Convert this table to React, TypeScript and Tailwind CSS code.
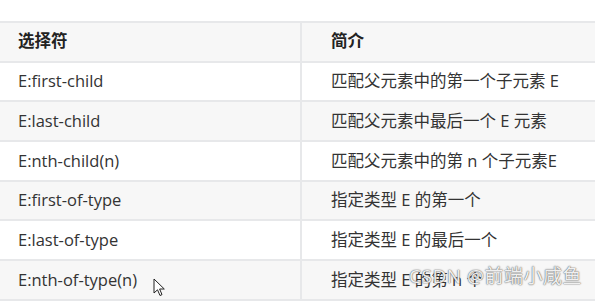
import React from "react";

const rows: [string, string][] = [
  ["E:first-child", "匹配父元素中的第一个子元素 E"],
  ["E:last-child", "匹配父元素中最后一个 E 元素"],
  ["E:nth-child(n)", "匹配父元素中的第 n 个子元素E"],
  ["E:first-of-type", "指定类型 E 的第一个"],
  ["E:last-of-type", "指定类型 E 的最后一个"],
  ["E:nth-of-type(n)", "指定类型 E 的第 n 个"],
];

export default function App() {
  return (
    <div
      className="relative w-[595px] h-[304px] bg-white overflow-hidden text-[#333] text-[16.5px]"
      style={{ fontFamily: '"Open Sans", "Noto Sans CJK SC", sans-serif' }}
    >
      <div className="pt-[21px]">
        <div className="border-t-2 border-[#e7e8ea]">
          <div className="flex h-[39.7px] bg-[#f7f7f7] border-b-2 border-[#e7e8ea] font-bold text-[#222]">
            <div className="w-[302px] flex items-center pl-[18px] border-r-2 border-[#e7e8ea]">选择符</div>
            <div className="flex-1 flex items-center pl-[29px]">简介</div>
          </div>
          {rows.map(([a, b], i) => (
            <div
              key={a}
              className={
                "flex h-[39.7px] border-b-2 border-[#e7e8ea] " +
                (i % 2 === 0 ? "bg-white" : "bg-[#f7f7f7]")
              }
            >
              <div className="w-[302px] flex items-center pl-[18px] border-r-2 border-[#e7e8ea]">{a}</div>
              <div className="flex-1 flex items-center pl-[29px]">{b}</div>
            </div>
          ))}
        </div>
      </div>
      <svg
        className="absolute left-[153px] top-[278px]"
        width="13"
        height="19"
        viewBox="0 0 13 19"
      >
        <path
          d="M1 1 L1 15 L4.5 11.8 L7 17.5 L9 16.6 L6.6 11 L11.3 11 Z"
          fill="#fff"
          stroke="#222"
          strokeWidth="1"
          strokeLinejoin="round"
        />
      </svg>
      <div className="absolute left-[409px] top-[262px] text-[19px] text-white/90 [text-shadow:0_0_1.5px_#555,0_0_1px_#777] tracking-[0.5px]">
        CSDN @前端小咸鱼
      </div>
    </div>
  );
}
